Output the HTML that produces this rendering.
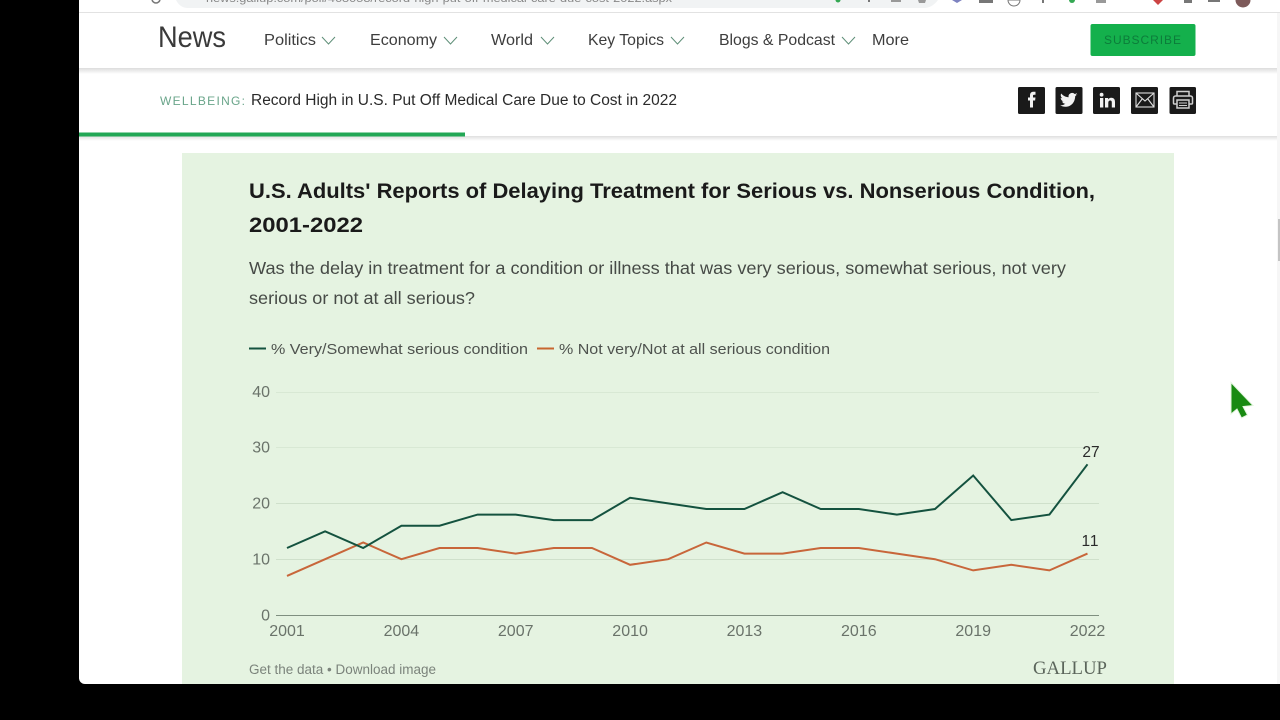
<!DOCTYPE html>
<html><head><meta charset="utf-8"><title>Gallup News</title>
<style>
html,body{margin:0;padding:0;background:#000;width:1280px;height:720px;overflow:hidden}
svg{display:block}
text{font-family:"Liberation Sans",sans-serif}
</style></head><body>
<svg width="1280" height="720" viewBox="0 0 1280 720" xmlns="http://www.w3.org/2000/svg">
<defs>
<linearGradient id="s1" x1="0" y1="0" x2="0" y2="1"><stop offset="0" stop-color="#dcdcdc"/><stop offset="1" stop-color="#fff"/></linearGradient>
<linearGradient id="s2" x1="0" y1="0" x2="0" y2="1"><stop offset="0" stop-color="#e6e6e6"/><stop offset="1" stop-color="#fff"/></linearGradient>
</defs>
<rect width="1280" height="720" fill="#000"/>
<path d="M79 0H1280V684H85a6 6 0 0 1-6-6Z" fill="#fff"/>
<!-- browser chrome -->
<rect x="79" y="0" width="1201" height="12" fill="#fff"/>
<path d="M176 0H938q-6 8-14 8H188q-8 0-12-8Z" fill="#f1f3f4"/>
<text x="206" y="2" font-size="11" fill="#888" textLength="466" lengthAdjust="spacingAndGlyphs">news.gallup.com/poll/468053/record-high-put-off-medical-care-due-cost-2022.aspx</text>
<circle cx="156" cy="-1" r="4" fill="none" stroke="#777" stroke-width="1.500"/>
<circle cx="838" cy="0" r="2.500" fill="#34a853"/>
<rect x="868" y="0" width="2" height="2" fill="#777"/>
<rect x="891" y="0" width="10" height="2" fill="#999"/>
<path d="M918 0h8l-1 3h-6Z" fill="#999"/>
<circle cx="1072" cy="0" r="3" fill="#34a853"/>
<rect x="979" y="0" width="14" height="3" fill="#777"/>
<path d="M1008 0a6 6 0 0 0 12 0Z" fill="none" stroke="#777"/>
<rect x="1042" y="0" width="2" height="3" fill="#777"/>
<path d="M1096 0h10v3h-10Z" fill="#999"/>
<path d="M952 0h10l-5 3Z" fill="#7d82c0"/>
<path d="M1153 0h10l-5 5Z" fill="#c44"/>
<rect x="1184" y="0" width="8" height="3" fill="#777"/>
<rect x="1208" y="0" width="12" height="2" fill="#777"/>
<circle cx="1243" cy="0" r="7.500" fill="#7d5a5a"/>
<rect x="79" y="12" width="1201" height="1" fill="#e2e2e2"/>
<!-- nav -->
<rect x="79" y="13" width="1201" height="55" fill="#fff"/>
<rect x="79" y="68" width="1198" height="6" fill="url(#s1)"/>
<text x="158" y="47" font-size="30" fill="#3a3a3a" textLength="68" lengthAdjust="spacingAndGlyphs">News</text>
<g font-size="16" fill="#3d3d3d">
<text x="264" y="45" textLength="52" lengthAdjust="spacingAndGlyphs">Politics</text>
<text x="370" y="45" textLength="67" lengthAdjust="spacingAndGlyphs">Economy</text>
<text x="491" y="45" textLength="42" lengthAdjust="spacingAndGlyphs">World</text>
<text x="588" y="45" textLength="76" lengthAdjust="spacingAndGlyphs">Key Topics</text>
<text x="719" y="45" textLength="116" lengthAdjust="spacingAndGlyphs">Blogs &amp; Podcast</text>
<text x="872" y="45" textLength="37" lengthAdjust="spacingAndGlyphs">More</text>
</g>
<g fill="none" stroke="#5f8f78" stroke-width="1">
<path d="M322 37l6.500 7 6.500-7"/>
<path d="M444 37l6.500 7 6.500-7"/>
<path d="M541 37l6.500 7 6.500-7"/>
<path d="M671 37l6.500 7 6.500-7"/>
<path d="M842 37l6.500 7 6.500-7"/>
</g>
<rect x="1090.500" y="24" width="105" height="32" rx="2" fill="#14b04c"/>
<text x="1104" y="44" font-size="12" fill="#0c7c3a" textLength="77" lengthAdjust="spacing">SUBSCRIBE</text>
<!-- article bar -->
<text x="160" y="105" font-size="12" fill="#6aa58a" textLength="85" lengthAdjust="spacing">WELLBEING:</text>
<text x="251" y="105" font-size="15.500" fill="#2a2a2a" textLength="426" lengthAdjust="spacingAndGlyphs">Record High in U.S. Put Off Medical Care Due to Cost in 2022</text>
<g fill="#1a1a1a">
<rect x="1018" y="87" width="27" height="27" rx="1.500"/>
<rect x="1055.500" y="87" width="27" height="27" rx="1.500"/>
<rect x="1093" y="87" width="27" height="27" rx="1.500"/>
<rect x="1131" y="87" width="27" height="27" rx="1.500"/>
<rect x="1169.500" y="87" width="26.500" height="27" rx="1.500"/>
</g>
<path d="M1030 107.500v-7h-2v-3h2v-2c0-2.500 1.300-3.700 3.500-3.700h2v3h-1.300c-1 0-1.200.4-1.200 1.200v1.500h2.500l-.4 3h-2.100v7Z" fill="#f2f2f2"/>
<path d="M1077.500 94.500c-.7.400-1.400.5-2.100.6.800-.5 1.300-1.200 1.600-2-.7.400-1.500.8-2.300.9a3.600 3.600 0 0 0-6.100 3.300c-3-.2-5.600-1.600-7.400-3.800-.9 1.600-.4 3.600 1.100 4.700-.6 0-1.100-.2-1.600-.5 0 1.800 1.200 3.200 2.900 3.600-.5.100-1 .2-1.600.1.500 1.400 1.800 2.400 3.400 2.400a7.300 7.300 0 0 1-5.300 1.500c5.500 3.500 14.700 1 15.100-9.100.7-.5 1.300-1.100 1.800-1.800Z" fill="#f2f2f2"/>
<path d="M1100 98h3.300v9.500H1100ZM1101.600 92.800a1.900 1.900 0 1 1 0 3.800 1.900 1.900 0 0 1 0-3.800ZM1105 98h3.100v1.400c.6-1 1.700-1.700 3.200-1.700 2.800 0 3.700 1.800 3.700 4.500v5.300h-3.200v-4.800c0-1.300-.3-2.200-1.500-2.200-1.400 0-2 1-2 2.300v4.700H1105Z" fill="#f2f2f2"/>
<g fill="none" stroke="#e0e0e0" stroke-width="1.100">
<rect x="1136" y="93" width="18" height="14"/>
<path d="M1136 93l9 8 9-8M1136 107l6.500-8.500M1154 107l-6.500-8.500"/>
</g>
<g fill="none" stroke="#cfcfcf" stroke-width="1.500">
<path d="M1177 96v-4.500h12V96"/>
<path d="M1177 104h-2.500a1 1 0 0 1-1-1v-5a2 2 0 0 1 2-2h15a2 2 0 0 1 2 2v5a1 1 0 0 1-1 1H1189"/>
<rect x="1177" y="100" width="12" height="8"/>
<path d="M1179 103h8M1179 105.500h8" stroke-width="1"/>
</g>
<!-- progress -->
<rect x="79" y="136" width="1198" height="1" fill="#e2e2e2"/>
<rect x="79" y="137" width="1198" height="4" fill="url(#s2)"/>
<rect x="79" y="132.500" width="386" height="4" fill="#22a755"/>
<!-- scrollbar -->
<rect x="1277" y="13" width="3" height="671" fill="#f6f6f6"/>
<rect x="1278" y="219" width="2" height="42" fill="#c4c4c4"/>
<!-- panel -->
<path d="M182 153H1174V684H182Z" fill="#e5f3e1"/>
<g font-weight="700" font-size="21" fill="#1a1a1a">
<text x="249" y="198" textLength="846" lengthAdjust="spacingAndGlyphs">U.S. Adults' Reports of Delaying Treatment for Serious vs. Nonserious Condition,</text>
<text x="249" y="232" textLength="114" lengthAdjust="spacingAndGlyphs">2001-2022</text>
</g>
<g font-size="17.500" fill="#464a46">
<text x="249" y="274" textLength="817" lengthAdjust="spacingAndGlyphs">Was the delay in treatment for a condition or illness that was very serious, somewhat serious, not very</text>
<text x="249" y="304" textLength="226" lengthAdjust="spacingAndGlyphs">serious or not at all serious?</text>
</g>
<rect x="249" y="347.500" width="17" height="2" fill="#14523f"/>
<text x="271" y="354" font-size="15" fill="#4e524e" textLength="257" lengthAdjust="spacingAndGlyphs">% Very/Somewhat serious condition</text>
<rect x="537" y="347.500" width="17" height="2" fill="#c8662f"/>
<text x="559" y="354" font-size="15" fill="#4e524e" textLength="271" lengthAdjust="spacingAndGlyphs">% Not very/Not at all serious condition</text>
<!-- chart -->
<g stroke="#d8e8d4" stroke-width="1">
<path d="M276 392.500H1099"/><path d="M276 447.500H1099"/>
</g>
<g stroke="#cfe0cb" stroke-width="1">
<path d="M276 503.500H1099"/><path d="M276 559.500H1099"/>
</g>
<path d="M276 615.500H1099" stroke="#7f8f80" stroke-width="1"/>
<g font-size="16" fill="#6a736a">
<g text-anchor="end">
<text x="270" y="397">40</text><text x="270" y="452.500">30</text><text x="270" y="508.500">20</text><text x="270" y="564.500">10</text><text x="270" y="620.500">0</text>
</g>
<g text-anchor="middle">
<text x="287" y="636">2001</text><text x="401.400" y="636">2004</text><text x="515.700" y="636">2007</text><text x="630.100" y="636">2010</text><text x="744.400" y="636">2013</text><text x="858.800" y="636">2016</text><text x="973.200" y="636">2019</text><text x="1087.500" y="636">2022</text>
</g>
</g>
<polyline fill="none" stroke="#c8663a" stroke-width="2" points="287,575.900 325.100,559.200 363.200,542.500 401.400,559.200 439.500,548 477.600,548 515.700,553.600 553.800,548 592,548 630.100,564.800 668.200,559.200 706.300,542.500 744.400,553.600 782.600,553.600 820.700,548 858.800,548 896.900,553.600 935,559.200 973.200,570.400 1011.300,564.800 1049.400,570.400 1087.500,553.600"/>
<polyline fill="none" stroke="#14523f" stroke-width="2" points="287,548 325.100,531.300 363.200,548 401.400,525.700 439.500,525.700 477.600,514.600 515.700,514.600 553.800,520.100 592,520.100 630.100,497.800 668.200,503.400 706.300,509 744.400,509 782.600,492.200 820.700,509 858.800,509 896.900,514.600 935,509 973.200,475.500 1011.300,520.100 1049.400,514.600 1087.500,464.300"/>
<text x="1091" y="457" font-size="15.500" fill="#2a2a2a" text-anchor="middle">27</text>
<text x="1090" y="546" font-size="15.500" fill="#2a2a2a" text-anchor="middle" textLength="17">11</text>
<text x="249" y="674" font-size="13.500" fill="#7b837b" textLength="187" lengthAdjust="spacingAndGlyphs">Get the data • Download image</text>
<text x="1033" y="674" font-size="18.500" fill="#5b655b" style='font-family:"Liberation Serif",serif' textLength="74" lengthAdjust="spacingAndGlyphs">GALLUP</text>
<!-- cursor -->
<path d="M1231 382.500V414L1237 409L1241.500 418L1247.500 415L1243 406.500L1253 405.500Z" fill="#188a12" stroke="#e4f5df" stroke-width="1"/>
</svg>
</body></html>
